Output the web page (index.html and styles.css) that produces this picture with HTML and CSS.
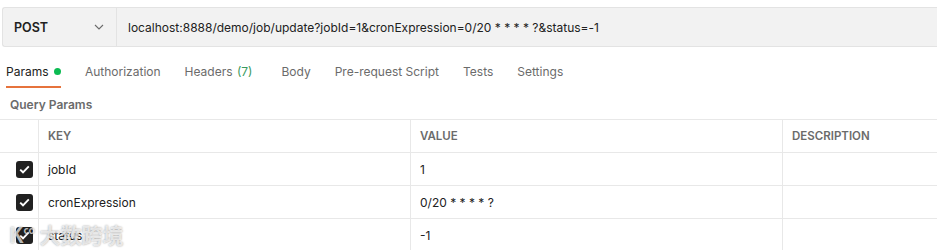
FILE: index.html
```html
<!DOCTYPE html>
<html lang="en">
<head>
  <meta charset="UTF-8" />
  <title>Request</title>
  <link rel="stylesheet" href="styles.css">
</head>
<body>

  <!-- URL bar -->
  <div class="url-bar">
    <div class="method">
      <span>POST</span>
      <svg class="chevron" width="10" height="6" viewBox="0 0 10 6"><path d="M1 1 L5 5 L9 1" fill="none" stroke="#6b6b6b" stroke-width="1.1"/></svg>
    </div>
    <div class="url">localhost:8888/demo/job/update?jobId=1&amp;cronExpression=0/20 * * * * ?&amp;status=-1</div>
  </div>

  <!-- Tabs -->
  <div class="tabs">
    <div class="tab active">Params <span class="dot"></span></div>
    <div class="tab">Authorization</div>
    <div class="tab">Headers <span class="count">(7)</span></div>
    <div class="tab">Body</div>
    <div class="tab">Pre-request Script</div>
    <div class="tab">Tests</div>
    <div class="tab">Settings</div>
  </div>

  <div class="section-title">Query Params</div>

  <div class="params">
    <div class="row head">
      <div class="cell check"></div>
      <div class="cell key">KEY</div>
      <div class="cell value">VALUE</div>
      <div class="cell desc">DESCRIPTION</div>
    </div>
    <div class="row">
      <div class="cell check"><span class="box"><svg width="11" height="9" viewBox="0 0 11 9"><path d="M1.2 4.6 L4 7.3 L9.8 1.4" fill="none" stroke="#fff" stroke-width="1.9"/></svg></span></div>
      <div class="cell key">jobId</div>
      <div class="cell value">1</div>
      <div class="cell desc"></div>
    </div>
    <div class="row">
      <div class="cell check"><span class="box"><svg width="11" height="9" viewBox="0 0 11 9"><path d="M1.2 4.6 L4 7.3 L9.8 1.4" fill="none" stroke="#fff" stroke-width="1.9"/></svg></span></div>
      <div class="cell key">cronExpression</div>
      <div class="cell value">0/20 * * * * ?</div>
      <div class="cell desc"></div>
    </div>
    <div class="row">
      <div class="cell check"><span class="box"><svg width="11" height="9" viewBox="0 0 11 9"><path d="M1.2 4.6 L4 7.3 L9.8 1.4" fill="none" stroke="#fff" stroke-width="1.9"/></svg></span></div>
      <div class="cell key">status</div>
      <div class="cell value">-1</div>
      <div class="cell desc"></div>
    </div>
  </div>

  <div class="watermark">K<sup>co</sup> 大数跨境</div>

</body>
</html>
```

FILE: styles.css
```css
body {
  font-family: Inter, "Noto Sans", sans-serif;
  margin: 0;
  background: #fff;
  color: #212121;
  font-size: 12px;
  position: relative;
  height: 250px;
  overflow: hidden;
}

.url-bar {
  display: flex;
  margin: 7px 0 0 2px;
  height: 38px;
  background: #f2f2f2;
  border-top: 1px solid #e3e3e3;
  border-bottom: 1px solid #e3e3e3;
  border-left: 1px solid #e3e3e3;
  border-radius: 3px 0 0 3px;
}

.method {
  width: 114px;
  display: flex;
  align-items: center;
  justify-content: space-between;
  padding: 0 12px 0 11px;
  box-sizing: border-box;
  border-right: 1px solid #e3e3e3;
  font-weight: 600;
  font-size: 12.5px;
}

.url {
  display: flex;
  align-items: center;
  padding-left: 11px;
  font-size: 12px;
  color: #212121;
}

.tabs {
  display: flex;
  gap: 24px;
  margin: 11px 0 0 6px;
}

.tab {
  font-size: 12px;
  color: #6b6b6b;
  padding: 6px 0 7px;
  border-bottom: 2px solid transparent;
}

.tab.active {
  color: #212121;
  border-bottom-color: #e6733c;
}

.dot {
  display: inline-block;
  width: 7px;
  height: 7px;
  border-radius: 50%;
  background: #0cbb52;
  margin-left: 2px;
  vertical-align: 1px;
}

.count {
  color: #3a9a5e;
  margin-left: 1px;
  margin-right: 5px;
}

.section-title {
  margin: 9px 0 0 10px;
  font-weight: 600;
  color: #6b6b6b;
  font-size: 12px;
  height: 22px;
}

.params {
  border-top: 1px solid #e8e8e8;
}

.row {
  display: grid;
  grid-template-columns: 38px 372px 372px 1fr;
  height: 33px;
  border-bottom: 1px solid #e8e8e8;
  box-sizing: border-box;
}

.cell {
  display: flex;
  align-items: center;
  padding-left: 9px;
  border-left: 1px solid #e8e8e8;
  font-size: 12px;
  color: #212121;
}

.cell.check {
  border-left: none;
  padding-left: 16px;
}

.head .cell {
  font-weight: 600;
  color: #6b6b6b;
  font-size: 11.5px;
}

.box {
  width: 17px;
  height: 17px;
  background: #212121;
  border-radius: 3px;
  display: flex;
  align-items: center;
  justify-content: center;
}

.watermark {
  position: absolute;
  left: 9px;
  top: 219px;
  font-size: 21px;
  font-weight: 700;
  font-family: "Noto Sans CJK SC", sans-serif;
  color: rgba(255, 255, 255, 0.7);
  text-shadow: 0 0 2px rgba(0, 0, 0, 0.4);
}

.watermark sup {
  font-size: 10px;
  vertical-align: 9px;
}
```
